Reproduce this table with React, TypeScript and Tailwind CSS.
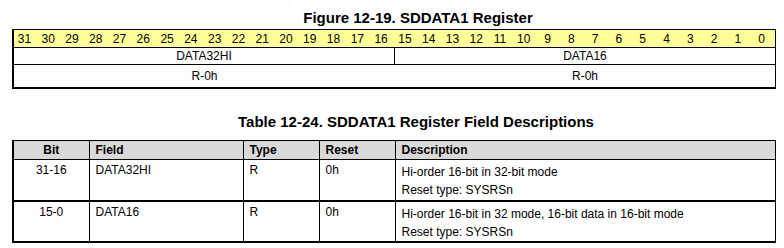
const BITS = Array.from({ length: 32 }, (_, i) => 31 - i);

const FIELDS = [
  { bit: '31-16', field: 'DATA32HI', type: 'R', reset: '0h', desc: ['Hi-order 16-bit in 32-bit mode', 'Reset type: SYSRSn'] },
  { bit: '15-0', field: 'DATA16', type: 'R', reset: '0h', desc: ['Hi-order 16-bit in 32 mode, 16-bit data in 16-bit mode', 'Reset type: SYSRSn'] },
];

export default function App() {
  return (
    <div className="w-[784px] h-[248px] bg-white text-black font-['Liberation_Sans',Arial,sans-serif] pl-[12px] pt-[9px]">
      <div className="w-[764px]">
        <h1 className="text-[15px] leading-[17px] font-bold text-center pl-[48px] h-[20px]">Figure 12-19. SDDATA1 Register</h1>

        <div className="border border-black border-l-2 border-b-2 w-[764px]">
          <div className="grid grid-cols-32 bg-[#ffff99] h-[18px] items-center text-[12px] leading-[14px] border-b border-black">
            {BITS.map((b) => (
              <span key={b} className="text-center pr-[3px]">{b}</span>
            ))}
          </div>
          <div className="flex h-[17px] border-b border-black text-[12px] leading-[17px]">
            <div className="w-[381px] text-center border-r border-black">DATA32HI</div>
            <div className="flex-1 text-center">DATA16</div>
          </div>
          <div className="flex h-[22px] text-[12px] leading-[22px]">
            <div className="w-[381px] text-center">R-0h</div>
            <div className="flex-1 text-center">R-0h</div>
          </div>
        </div>

        <h2 className="text-[15px] leading-[17px] font-bold text-center pl-[44px] mt-[24px] h-[27px]">
          Table 12-24. SDDATA1 Register Field Descriptions
        </h2>

        <table className="border-collapse table-fixed w-[764px] text-[12px] leading-[18px]">
          <colgroup>
            <col className="w-[76px]" />
            <col className="w-[154px]" />
            <col className="w-[76px]" />
            <col className="w-[76px]" />
            <col />
          </colgroup>
          <thead>
            <tr className="bg-[#d9d9d9] h-[19px] font-bold">
              <th className="border border-black border-l-2 font-bold text-center py-0">Bit</th>
              <th className="border border-black font-bold text-left px-[6px] py-0">Field</th>
              <th className="border border-black font-bold text-left px-[6px] py-0">Type</th>
              <th className="border border-black font-bold text-left px-[6px] py-0">Reset</th>
              <th className="border border-black font-bold text-left px-[6px] py-0">Description</th>
            </tr>
          </thead>
          <tbody>
            {FIELDS.map((f, i) => (
              <tr key={f.bit} className={i === 0 ? 'h-[41px]' : 'h-[40px]'}>
                <td className="border border-black border-l-2 border-b-2 align-top text-center pt-[1px]">{f.bit}</td>
                <td className="border border-black border-b-2 align-top px-[6px] pt-[1px]">{f.field}</td>
                <td className="border border-black border-b-2 align-top px-[6px] pt-[1px]">{f.type}</td>
                <td className="border border-black border-b-2 align-top px-[6px] pt-[1px]">{f.reset}</td>
                <td className="border border-black border-b-2 align-top px-[6px] pt-[3px]">
                  {f.desc.map((d) => (
                    <div key={d}>{d}</div>
                  ))}
                </td>
              </tr>
            ))}
          </tbody>
        </table>
      </div>
    </div>
  );
}
